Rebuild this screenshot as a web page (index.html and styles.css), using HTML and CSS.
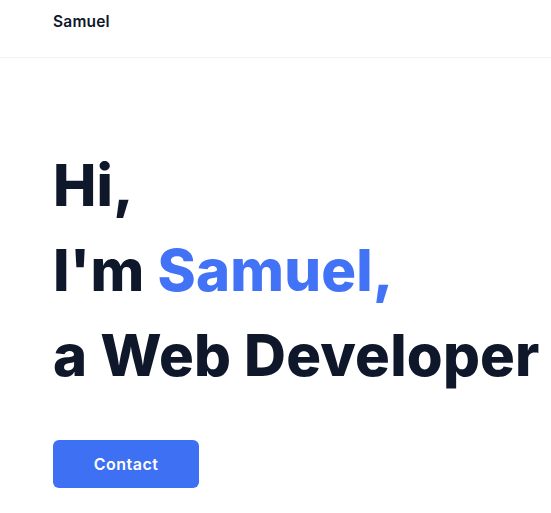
FILE: index.html
```html
<!DOCTYPE html>
<html lang="en">
<head>
<meta charset="utf-8">
<title>Samuel</title>
<link rel="stylesheet" href="styles.css">
</head>
<body>
<header class="site-header">
  <div class="container header-inner">
    <a class="brand" href="#">Samuel</a>
  </div>
</header>
<main class="container hero">
  <h1 class="hero-title">
    <span class="line">Hi,</span>
    <span class="line">I'm <span class="accent">Samuel,</span></span>
    <span class="line">a Web Developer</span>
  </h1>
  <a class="btn" href="#">Contact</a>
</main>
</body>
</html>
```

FILE: styles.css
```css
* { box-sizing: border-box; }
html, body { margin: 0; padding: 0; background: #ffffff; }
body {
  font-family: Inter, "Noto Sans", sans-serif;
  color: #0f172a;
}
.container { padding: 0 53px; }
.site-header {
  height: 58px;
  border-bottom: 1px solid #f1f2f4;
}
.header-inner {
  height: 57px;
  display: flex;
  align-items: center;
}
.brand {
  font-size: 15.5px;
  font-weight: 600;
  letter-spacing: 0.2px;
  color: #0f172a;
  text-decoration: none;
  margin-top: -15px;
}
.hero { padding-top: 85px; }
.hero-title {
  margin: 0;
  font-size: 58px;
  font-weight: 800;
  line-height: 85px;
  letter-spacing: 0.2px;
}
.line { display: block; white-space: nowrap; }
.accent { color: #4272f5; }
.btn {
  margin-top: 42px;
  display: inline-flex;
  align-items: center;
  justify-content: center;
  width: 146px;
  height: 48px;
  border-radius: 6px;
  background: #3e70f3;
  color: #ffffff;
  font-size: 16px;
  font-weight: 600;
  letter-spacing: 0.5px;
  text-decoration: none;
}
```
